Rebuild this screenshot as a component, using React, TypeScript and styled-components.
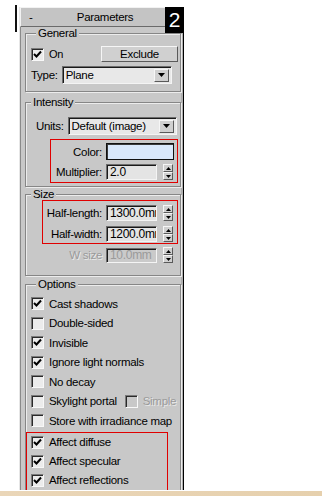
import React from 'react';
import styled, { createGlobalStyle } from 'styled-components';

const GlobalStyle = createGlobalStyle`
  html, body {
    margin: 0;
    padding: 0;
    background: #ffffff;
  }
  * {
    box-sizing: border-box;
  }
`;

const Page = styled.div`
  width: 322px;
  height: 496px;
  display: flex;
  flex-direction: column;
  background: #ffffff;
  font-family: 'Liberation Sans', Arial, sans-serif;
  font-size: 11px;
  letter-spacing: -0.3px;
  color: #000;
  overflow: hidden;
`;

const Workspace = styled.div`
  height: 491px;
  display: flex;
  align-items: flex-start;
  padding-left: 15px;
`;

const Marker = styled.div`
  width: 2px;
  height: 27px;
  margin-top: 5px;
  background: #111;
`;

const Panel = styled.div`
  position: relative;
  width: 165px;
  height: 483px;
  margin-top: 7px;
  margin-left: 2px;
  background: #c8c8c8;
  border-left: 1px solid #e6e6e6;
  border-right: 1px solid #000;
  box-shadow: inset 1px 0 0 #8a8a8a, inset -2px 0 0 #b0b0b0;
  overflow: hidden;
`;

const TitleBar = styled.div`
  height: 20px;
  display: flex;
  align-items: center;
  background: #c4c4c4;
  border-top: 1px solid #f2f2f2;
  border-left: 1px solid #f2f2f2;
  border-bottom: 1px solid #6a6a6a;
  font-size: 11.5px;
`;

const Collapse = styled.span`
  padding-left: 8px;
  width: 20px;
`;

const TitleText = styled.span`
  flex: 1;
  text-align: center;
  padding-right: 14px;
`;

const Badge = styled.div`
  position: absolute;
  top: 0;
  right: -1px;
  width: 19px;
  height: 26px;
  background: #000;
  color: #fff;
  font-size: 21px;
  line-height: 26px;
  letter-spacing: 0;
  text-align: center;
  z-index: 2;
`;

const Group = styled.fieldset<{ $mt: number; $pad: string }>`
  margin: ${({ $mt }) => $mt}px 2px 0 5px;
  padding: ${({ $pad }) => $pad};
  border: 1px solid #868686;
  box-shadow: 1px 1px 0 #ececec, inset 1px 1px 0 #ececec;
  min-width: 0;
`;

const Legend = styled.legend`
  margin-left: 5px;
  padding: 0 2px;
  line-height: 13px;
  font-size: 11.5px;
  background: #c8c8c8;
`;

const Row = styled.div<{ $h: number; $ml?: number; $mt?: number }>`
  display: flex;
  align-items: center;
  height: ${({ $h }) => $h}px;
  margin-left: ${({ $ml = 0 }) => $ml}px;
  margin-top: ${({ $mt = 0 }) => $mt}px;
  white-space: nowrap;
`;

const Label = styled.span<{ $w?: number; $disabled?: boolean }>`
  display: inline-block;
  width: ${({ $w }) => ($w ? `${$w}px` : 'auto')};
  text-align: right;
  padding-right: 4px;
  font-size: 11.5px;
  color: ${({ $disabled }) => ($disabled ? '#9a9a9a' : '#000')};
  text-shadow: ${({ $disabled }) => ($disabled ? '1px 1px 0 #e8e8e8' : 'none')};
  flex-shrink: 0;
`;

const Sunken = styled.div<{ $w: number; $h: number; $bg?: string }>`
  width: ${({ $w }) => $w}px;
  height: ${({ $h }) => $h}px;
  background: ${({ $bg = '#e4e4e4' }) => $bg};
  border-top: 1px solid #6c6c6c;
  border-left: 1px solid #6c6c6c;
  border-bottom: 1px solid #f4f4f4;
  border-right: 1px solid #f4f4f4;
  box-shadow: inset 1px 1px 0 #1a1a1a;
  display: flex;
  align-items: center;
  overflow: hidden;
  flex-shrink: 0;
`;

const FieldText = styled.span<{ $disabled?: boolean }>`
  padding-left: 3px;
  font-size: 12px;
  white-space: nowrap;
  color: ${({ $disabled }) => ($disabled ? '#9a9a9a' : '#000')};
`;

const Swatch = styled.div`
  width: 68px;
  height: 17px;
  background: #d9e8fb;
  border: 1px solid #111;
  box-shadow: inset 1px 1px 0 #3a3a3a;
`;

const Raised = styled.div<{ $w: number; $h: number }>`
  width: ${({ $w }) => $w}px;
  height: ${({ $h }) => $h}px;
  background: #d0d0d0;
  border-top: 1px solid #f6f6f6;
  border-left: 1px solid #f6f6f6;
  border-bottom: 1px solid #5a5a5a;
  border-right: 1px solid #5a5a5a;
  display: flex;
  align-items: center;
  justify-content: center;
  flex-shrink: 0;
`;

const Button = styled(Raised)`
  margin-left: auto;
  margin-right: 2px;
  font-size: 11.5px;
`;

const Dropdown = styled.div<{ $w: number }>`
  width: ${({ $w }) => $w}px;
  height: 18px;
  display: flex;
  align-items: center;
  justify-content: space-between;
  padding: 0 2px 0 3px;
  background: #e8e8e8;
  border-top: 1px solid #6c6c6c;
  border-left: 1px solid #6c6c6c;
  border-bottom: 1px solid #f4f4f4;
  border-right: 1px solid #f4f4f4;
  box-shadow: inset 1px 1px 0 #1a1a1a;
  font-size: 11.5px;
  flex-shrink: 0;
`;

const SpinStack = styled.div`
  display: flex;
  flex-direction: column;
  margin-left: 6px;
`;

const RedBox = styled.div<{ $ml: number; $w: number; $mt: number; $pad: string }>`
  margin-left: ${({ $ml }) => $ml}px;
  margin-top: ${({ $mt }) => $mt}px;
  width: ${({ $w }) => $w}px;
  padding: ${({ $pad }) => $pad};
  border: 1px solid #e00000;
  display: flex;
  flex-direction: column;
`;

const CheckRow = styled.div<{ $h: number }>`
  display: flex;
  align-items: center;
  height: ${({ $h }) => $h}px;
  white-space: nowrap;
  font-size: 11.5px;
`;

const Box = styled.div<{ $disabled?: boolean }>`
  width: 13px;
  height: 13px;
  margin-right: 5px;
  background: ${({ $disabled }) => ($disabled ? '#c8c8c8' : '#ececec')};
  border-top: 1px solid #7a7a7a;
  border-left: 1px solid #7a7a7a;
  border-bottom: 1px solid #f8f8f8;
  border-right: 1px solid #f8f8f8;
  box-shadow: inset 1px 1px 0 #2a2a2a;
  display: flex;
  align-items: center;
  justify-content: center;
  flex-shrink: 0;
`;

const CheckText = styled.span<{ $disabled?: boolean }>`
  color: ${({ $disabled }) => ($disabled ? '#9a9a9a' : '#000')};
  text-shadow: ${({ $disabled }) => ($disabled ? '1px 1px 0 #e8e8e8' : 'none')};
`;

const Spacer = styled.span<{ $w: number }>`
  width: ${({ $w }) => $w}px;
  flex-shrink: 0;
`;

const OptionList = styled.div`
  display: flex;
  flex-direction: column;
`;

const BottomStrip = styled.div`
  height: 5px;
  background: linear-gradient(90deg, #ead6b8 0%, #e6d0ad 100%);
`;

const DownArrow = () => (
  <svg width="7" height="4" viewBox="0 0 7 4">
    <path d="M0 0 H7 L3.5 4 Z" fill="#000" />
  </svg>
);

const Spinner = () => (
  <SpinStack>
    <Raised $w={10} $h={8}>
      <svg width="5" height="3" viewBox="0 0 5 3">
        <path d="M0 3 H5 L2.5 0 Z" fill="#000" />
      </svg>
    </Raised>
    <Raised $w={10} $h={8}>
      <svg width="5" height="3" viewBox="0 0 5 3">
        <path d="M0 0 H5 L2.5 3 Z" fill="#000" />
      </svg>
    </Raised>
  </SpinStack>
);

const Check = ({ checked, disabled }: { checked: boolean; disabled?: boolean }) => (
  <Box $disabled={disabled}>
    {checked && (
      <svg width="9" height="9" viewBox="0 0 9 9">
        <path d="M1 4 L3.5 6.5 L8 1.5" fill="none" stroke="#000" strokeWidth="2" />
      </svg>
    )}
  </Box>
);

const Select = ({ width, value }: { width: number; value: string }) => (
  <Dropdown $w={width}>
    <span>{value}</span>
    <Raised $w={15} $h={13}>
      <DownArrow />
    </Raised>
  </Dropdown>
);

const options = [
  { label: 'Cast shadows', checked: true },
  { label: 'Double-sided', checked: false },
  { label: 'Invisible', checked: true },
  { label: 'Ignore light normals', checked: true },
  { label: 'No decay', checked: false },
  { label: 'Skylight portal', checked: false, extra: 'Simple' },
  { label: 'Store with irradiance map', checked: false },
];

const affects = ['Affect diffuse', 'Affect specular', 'Affect reflections'];

export default function App() {
  return (
    <Page>
      <GlobalStyle />
      <Workspace>
        <Marker />
        <Panel>
          <TitleBar>
            <Collapse>-</Collapse>
            <TitleText>Parameters</TitleText>
          </TitleBar>
          <Badge>2</Badge>

          <Group $mt={0} $pad="5px 0 7px 5px">
            <Legend>General</Legend>
            <Row $h={18}>
              <Check checked />
              <CheckText>On</CheckText>
              <Button $w={77} $h={16}>Exclude</Button>
            </Row>
            <Row $h={18} $mt={3}>
              <Label>Type:</Label>
              <Select width={110} value="Plane" />
            </Row>
          </Group>

          <Group $mt={4} $pad="0 0 3px 0">
            <Legend>Intensity</Legend>
            <Row $h={18} $mt={8} $ml={10}>
              <Label>Units:</Label>
              <Select width={109} value="Default (image)" />
            </Row>
            <RedBox $ml={24} $w={128} $mt={4} $pad="3px 0 2px 0">
              <Row $h={17}>
                <Label $w={55}>Color:</Label>
                <Swatch />
              </Row>
              <Row $h={16} $mt={4}>
                <Label $w={55}>Multiplier:</Label>
                <Sunken $w={51} $h={16}>
                  <FieldText>2.0</FieldText>
                </Sunken>
                <Spinner />
              </Row>
            </RedBox>
          </Group>

          <Group $mt={1} $pad="0 0 12px 0">
            <Legend>Size</Legend>
            <RedBox $ml={16} $w={136} $mt={-1} $pad="4px 0 1px 0">
              <Row $h={16}>
                <Label $w={63}>Half-length:</Label>
                <Sunken $w={51} $h={16}>
                  <FieldText>1300.0mm</FieldText>
                </Sunken>
                <Spinner />
              </Row>
              <Row $h={16} $mt={5}>
                <Label $w={63}>Half-width:</Label>
                <Sunken $w={51} $h={16}>
                  <FieldText>1200.0mm</FieldText>
                </Sunken>
                <Spinner />
              </Row>
            </RedBox>
            <Row $h={16} $mt={3} $ml={17}>
              <Label $w={63} $disabled>
                W size
              </Label>
              <Sunken $w={51} $h={15} $bg="#cacaca">
                <FieldText $disabled>10.0mm</FieldText>
              </Sunken>
              <Spinner />
            </Row>
          </Group>

          <Group $mt={2} $pad="3px 0 0 5px">
            <Legend>Options</Legend>
            <OptionList>
              {options.map((o) => (
                <CheckRow key={o.label} $h={19.5}>
                  <Check checked={o.checked} />
                  <CheckText>{o.label}</CheckText>
                  {o.extra && (
                    <>
                      <Spacer $w={8} />
                      <Check checked={false} disabled />
                      <CheckText $disabled>{o.extra}</CheckText>
                    </>
                  )}
                </CheckRow>
              ))}
              <RedBox $ml={-5} $w={142} $mt={1} $pad="0 0 0 4px">
                {affects.map((a) => (
                  <CheckRow key={a} $h={19}>
                    <Check checked />
                    <CheckText>{a}</CheckText>
                  </CheckRow>
                ))}
              </RedBox>
            </OptionList>
          </Group>
        </Panel>
      </Workspace>
      <BottomStrip />
    </Page>
  );
}
